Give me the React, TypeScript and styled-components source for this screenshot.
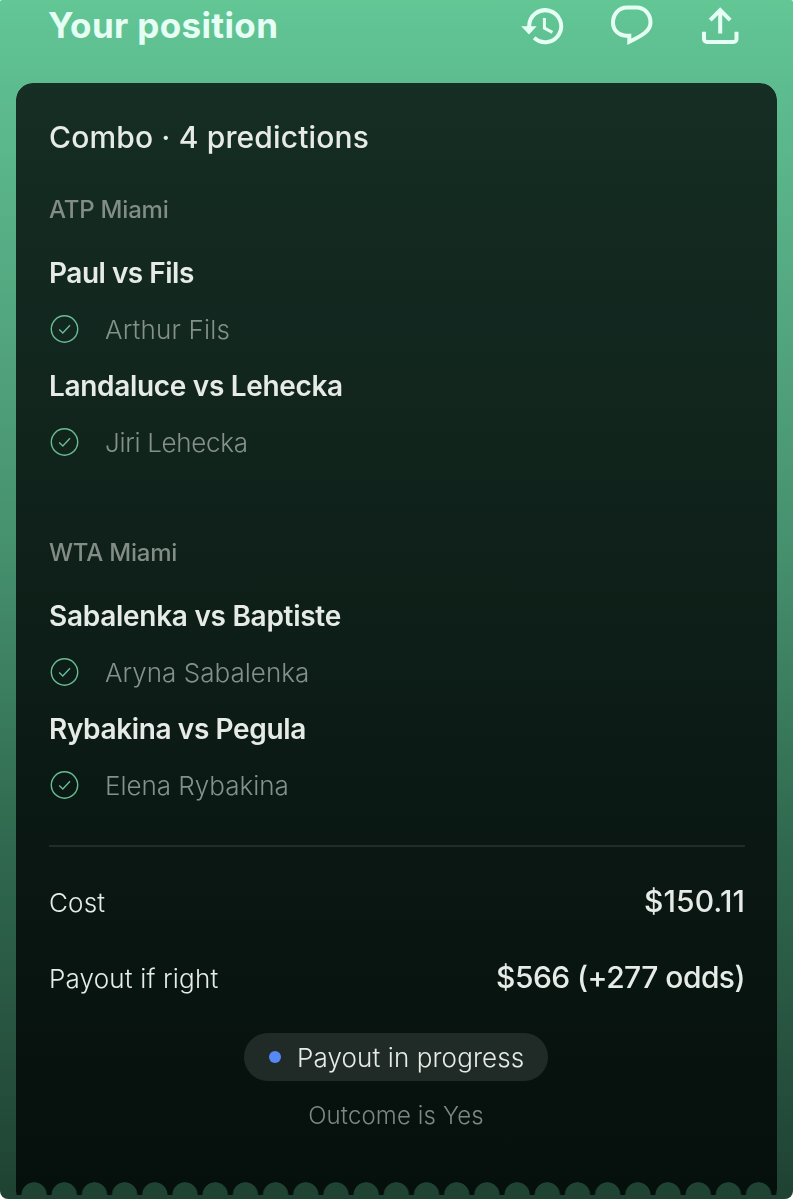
import React from "react";
import styled, { createGlobalStyle } from "styled-components";

const GlobalStyle = createGlobalStyle`
  * { box-sizing: border-box; }
  body { margin: 0; background: #fff; font-family: Inter, "Liberation Sans", sans-serif; }
`;

const Page = styled.main`
  width: 793px;
  height: 1199px;
  padding: 0 16px;
  overflow: hidden;
  border-radius: 2px 2px 8px 8px;
  background: linear-gradient(180deg, #62c695 0px, #5cba8e 110px, #54a881 300px, #458f6d 560px, #30694f 840px, #285541 1020px, #1f4232 1199px);
`;

const Header = styled.header`
  height: 83px;
  padding: 0 33px 0 32px;
  display: flex;
  align-items: flex-start;
  justify-content: space-between;
`;

const Line = styled.div<{ $size: number; $height: number; $weight?: number; $track?: number; $color?: string }>`
  margin: 0;
  font-size: ${(p) => p.$size}px;
  line-height: ${(p) => p.$height}px;
  height: ${(p) => p.$height}px;
  font-weight: ${(p) => p.$weight ?? 400};
  letter-spacing: ${(p) => p.$track ?? 0}px;
  color: ${(p) => p.$color ?? "#e6ebe8"};
  white-space: nowrap;
`;

const Actions = styled.div`
  display: flex;
  margin-right: -4px;
`;

const Card = styled.section`
  height: 1112px;
  padding: 32px 32px 0 33px;
  border-radius: 17px 17px 0 0;
  background: linear-gradient(180deg, #172e25 0px, #142b22 80px, #11251d 330px, #0b1914 700px, #06100c 1080px, #050f0b 1112px);
  mask:
    linear-gradient(#000, #000) 0 0 / 100% calc(100% - 13px) no-repeat,
    radial-gradient(circle at 50% 100%, transparent 12.4px, #000 13px) 3px 100% / 30.2px 13px repeat-x;
`;

const Group = styled.section`
  height: 343px;
  padding-top: 35px;
`;

const Matches = styled.div`
  padding-top: 29px;
`;

const Match = styled.div`
  height: 113px;
`;

const Pick = styled.div`
  height: 40px;
  margin-top: 19px;
  display: flex;
  align-items: center;
  gap: 25px;
`;

const Divider = styled.hr`
  height: 2px;
  margin: 0;
  border: 0;
  background: #202e28;
`;

const Row = styled.div`
  height: 76px;
  display: flex;
  align-items: center;
  justify-content: space-between;
`;

const RowLabel = styled(Line)`
  margin-top: 2px;
`;

const RowValue = styled(Line)`
  margin-top: -2px;
`;

const Totals = styled.div`
  padding-top: 17px;
`;

const Footer = styled.footer`
  margin: 17px 0 0 -2px;
  display: flex;
  flex-direction: column;
  align-items: center;
  gap: 15px;
`;

const Pill = styled.div`
  width: 304px;
  height: 48px;
  padding-left: 25px;
  border-radius: 24px;
  display: flex;
  align-items: center;
  gap: 16px;
  background: #202a26;
`;

const PillText = styled(Line)`
  margin-top: 2px;
`;

const Dot = styled.i`
  width: 12px;
  height: 12px;
  border-radius: 50%;
  background: #5689f5;
`;

const CheckCircle = () => (
  <svg width="31" height="30" viewBox="0 0 31 30" fill="none" stroke="#69bd94" strokeWidth="1.4">
    <circle cx="15.5" cy="14" r="13.2" />
    <path d="M10.2 14.6 13.8 18 21 10.3" />
  </svg>
);

const ActionIcons = () => (
  <Actions>
    <svg width="228" height="50" viewBox="0 0 228 50" fill="none" stroke="#e6fff4" strokeWidth="4">
      <path d="M9.2 28v-2a16 16 0 1 1 5 11.8" />
      <path d="M1.2 26.2h15.500l-7.700 8.200z" fill="#e6fff4" stroke="none" />
      <path d="M24.400 18v10l8 4.400" strokeWidth="3" />
      <path d="M109.300 41.800V35.700H107c-8.200 0-14-5.400-14-13.300 0-8.500 6-14.800 14-14.800h9.500c8 0 14 6.300 14 14.800C130.500 31 122 35.500 109.300 41.800z" strokeMiterlimit="8" />
      <path d="M200.200 33.500V10M190.200 20.200l10-10.200 10 10.200" />
      <path d="M184 31.700v7.300a3 3 0 0 0 3 3h26.500a3 3 0 0 0 3-3v-7.300" />
    </svg>
  </Actions>
);

const groups = [
  { name: "ATP Miami", matches: [
    { title: "Paul vs Fils", titleTrack: -0.5, pick: "Arthur Fils", pickTrack: 0.18 },
    { title: "Landaluce vs Lehecka", titleTrack: -0.32, pick: "Jiri Lehecka", pickTrack: -0.32 },
  ] },
  { name: "WTA Miami", matches: [
    { title: "Sabalenka vs Baptiste", titleTrack: -0.28, pick: "Aryna Sabalenka", pickTrack: 0.02 },
    { title: "Rybakina vs Pegula", titleTrack: -0.37, pick: "Elena Rybakina", pickTrack: -0.03 },
  ] },
];

export default function App() {
  return (
    <>
      <GlobalStyle />
      <Page>
        <Header>
          <Line as="h1" $size={35} $height={51} $weight={700} $track={0.35} $color="#e6fff4">Your position</Line>
          <ActionIcons />
        </Header>
        <Card>
          <Line $size={30} $height={44} $weight={500} $track={0.15}>Combo · 4 predictions</Line>
          {groups.map((g) => (
            <Group key={g.name}>
              <Line $size={24} $height={32} $weight={500} $track={-0.2} $color="#828d87">{g.name}</Line>
              <Matches>
                {g.matches.map((m) => (
                  <Match key={m.title}>
                    <Line $size={28} $height={36} $weight={600} $track={m.titleTrack}>{m.title}</Line>
                    <Pick>
                      <CheckCircle />
                      <Line $size={26} $height={36} $weight={300} $track={m.pickTrack} $color="#84908a">{m.pick}</Line>
                    </Pick>
                  </Match>
                ))}
              </Matches>
            </Group>
          ))}
          <Divider />
          <Totals>
            <Row>
              <RowLabel $size={26} $height={36} $weight={300} $track={0.15}>Cost</RowLabel>
              <RowValue $size={30} $height={38} $weight={500} $track={0.1}>$150.11</RowValue>
            </Row>
            <Row>
              <RowLabel $size={26} $height={36} $weight={300} $track={0.18}>Payout if right</RowLabel>
              <RowValue $size={30} $height={38} $weight={500} $track={-0.55}>$566 (+277 odds)</RowValue>
            </Row>
          </Totals>
          <Footer>
            <Pill>
              <Dot />
              <PillText $size={26} $height={36} $weight={300} $track={0.12}>Payout in progress</PillText>
            </Pill>
            <Line $size={24} $height={40} $weight={300} $track={0.12} $color="#7e8883">Outcome is Yes</Line>
          </Footer>
        </Card>
      </Page>
    </>
  );
}
